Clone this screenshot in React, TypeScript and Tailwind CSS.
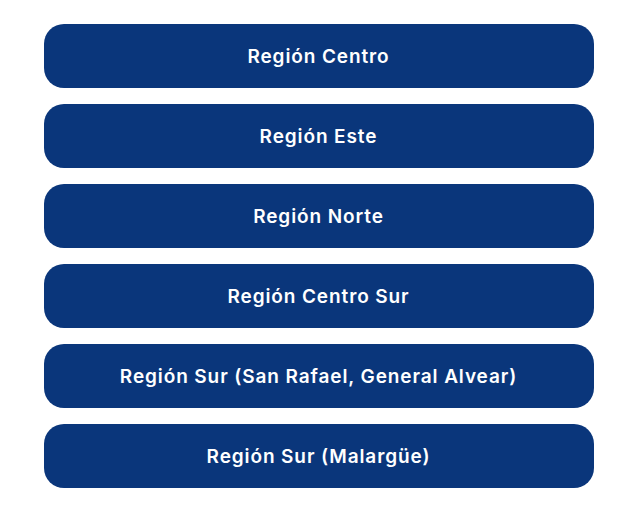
const regions = [
	"Región Centro",
	"Región Este",
	"Región Norte",
	"Región Centro Sur",
	"Región Sur (San Rafael, General Alvear)",
	"Región Sur (Malargüe)",
];

const RegionButton = ({ label }: { label: string }): JSX.Element => {
	return (
		<button className="h-16 w-full pt-[3px] rounded-[20px] bg-[#0a367b] text-white text-[19px] tracking-[0.9px] font-semibold flex items-center justify-center">
			{label}
		</button>
	);
};

export default function App() {
	return (
		<div className="min-h-screen bg-white pt-6 font-['Inter',sans-serif]">
			<div className="w-[550px] mx-auto flex flex-col gap-4">
				{regions.map((r) => (
					<RegionButton key={r} label={r} />
				))}
			</div>
		</div>
	);
}
